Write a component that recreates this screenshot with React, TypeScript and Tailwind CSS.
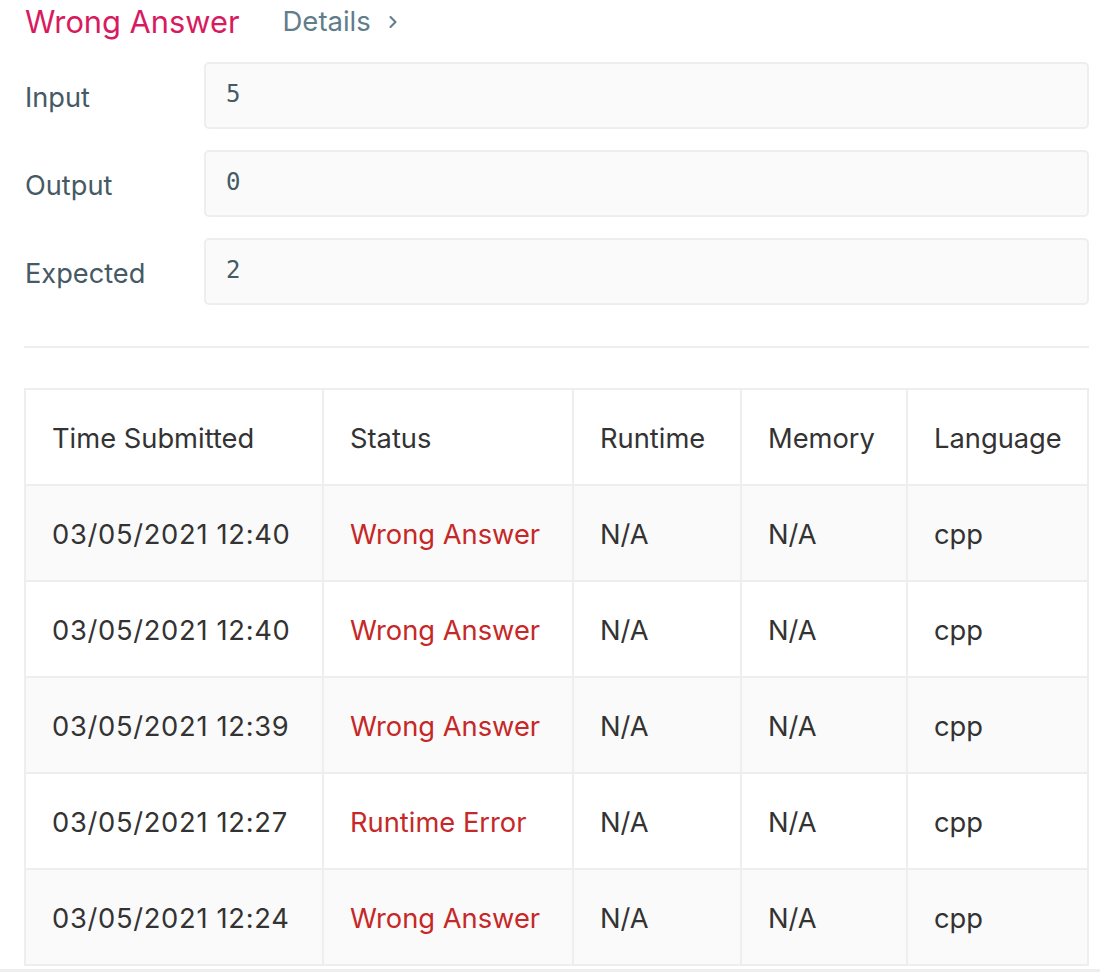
import { ChevronRight } from "lucide-react"

const fields = [
  { label: "Input", value: "5" },
  { label: "Output", value: "0" },
  { label: "Expected", value: "2" },
]

const submissions = [
  { time: "03/05/2021 12:40", status: "Wrong Answer" },
  { time: "03/05/2021 12:40", status: "Wrong Answer" },
  { time: "03/05/2021 12:39", status: "Wrong Answer" },
  { time: "03/05/2021 12:27", status: "Runtime Error" },
  { time: "03/05/2021 12:24", status: "Wrong Answer" },
]

const cell = "border-2 border-[#eeeeee] px-[26px] h-[96px] pt-[4px] text-left font-normal whitespace-nowrap"

export default function App() {
  return (
    <div className="bg-white font-['Inter',sans-serif] text-[#333] border-b-[3px] border-[#eeeeee]">
      <div className="px-[24px] pr-[11px]">
        <div className="flex items-center h-[44px] pl-[1px]">
          <span className="text-[30.8px] text-[#d81b60]">Wrong Answer</span>
          <span className="ml-[43px] flex items-center text-[27.5px] text-[#607d8b]">
            Details
            <ChevronRight className="ml-[12px] w-[20px] h-[20px]" strokeWidth={2.5} />
          </span>
        </div>

        <div className="mt-[18px] flex flex-col gap-[21px]">
          {fields.map((f) => (
            <div key={f.label} className="flex items-center">
              <div className="w-[180px] pl-[1px] pt-[6px] text-[27.2px] text-[#455a64]">{f.label}</div>
              <div className="flex-1 h-[67px] rounded-[5px] border-2 border-[#eeeeee] bg-[#fafafa] px-[20px] flex items-center pb-[4px] font-['DejaVu_Sans_Mono',monospace] text-[24px] text-[#455a64]">
                {f.value}
              </div>
            </div>
          ))}
        </div>

        <div className="mt-[41px] border-t-2 border-[#eeeeee]" />

        <table className="mt-[40px] w-full table-fixed border-collapse text-[27.3px]">
          <colgroup>
            <col className="w-[298px]" />
            <col className="w-[250px]" />
            <col className="w-[168px]" />
            <col className="w-[166px]" />
            <col />
          </colgroup>
          <thead>
            <tr>
              <th className={cell}>Time Submitted</th>
              <th className={cell}>Status</th>
              <th className={cell}>Runtime</th>
              <th className={cell}>Memory</th>
              <th className={cell}>Language</th>
            </tr>
          </thead>
          <tbody>
            {submissions.map((s, i) => (
              <tr key={i} className={i % 2 === 0 ? "bg-[#fafafa]" : "bg-white"}>
                <td className={`${cell} tracking-[0.7px]`}>{s.time}</td>
                <td className={`${cell} text-[#c62828]`}>{s.status}</td>
                <td className={cell}>N/A</td>
                <td className={cell}>N/A</td>
                <td className={cell}>cpp</td>
              </tr>
            ))}
          </tbody>
        </table>
        <div className="h-[3px]" />
      </div>
    </div>
  )
}
